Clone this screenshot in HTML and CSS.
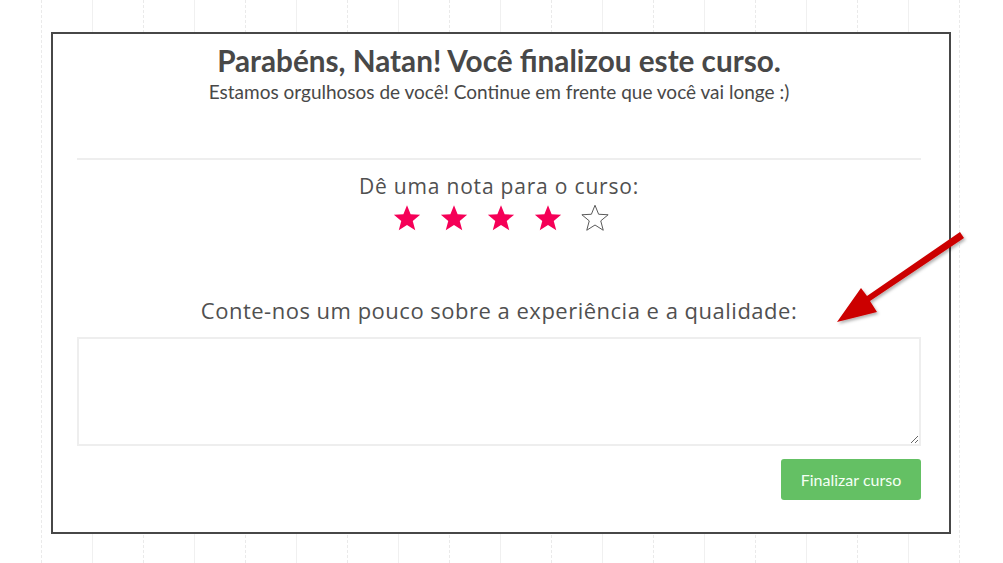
FILE: index.html
```html
<!DOCTYPE html>
<html lang="pt-BR">
<head>
<meta charset="utf-8">
<title>Curso finalizado</title>
<link rel="stylesheet" href="styles.css">
</head>
<body>
<div class="grid-bg" aria-hidden="true">
  <span class="gl dashed"></span><span class="gl"></span><span class="gl dashed"></span><span class="gl"></span>
  <span class="gl dashed"></span><span class="gl"></span><span class="gl dashed"></span><span class="gl"></span>
  <span class="gl dashed"></span><span class="gl"></span><span class="gl dashed"></span><span class="gl"></span>
  <span class="gl dashed"></span><span class="gl"></span><span class="gl dashed"></span><span class="gl"></span>
  <span class="gl dashed"></span><span class="gl"></span><span class="gl dashed"></span>
</div>
<main class="page">
  <section class="modal">
    <header class="head">
      <h1 class="title">Parabéns, Natan! Você finalizou este curso.</h1>
      <p class="subtitle">Estamos orgulhosos de você! Continue em frente que você vai longe :)</p>
    </header>
    <hr class="divider">
    <div class="rating">
      <p class="label">Dê uma nota para o curso:</p>
      <div class="stars">
        <svg class="star on" viewBox="0 0 24 24"><path d="M12 1.8l2.9 7.2 7.6.4-5.9 4.9 2 7.5L12 17.6l-6.6 4.2 2-7.5L1.5 9.4l7.6-.4z"/></svg>
        <svg class="star on" viewBox="0 0 24 24"><path d="M12 1.8l2.9 7.2 7.6.4-5.9 4.9 2 7.5L12 17.6l-6.6 4.2 2-7.5L1.5 9.4l7.6-.4z"/></svg>
        <svg class="star on" viewBox="0 0 24 24"><path d="M12 1.8l2.9 7.2 7.6.4-5.9 4.9 2 7.5L12 17.6l-6.6 4.2 2-7.5L1.5 9.4l7.6-.4z"/></svg>
        <svg class="star on" viewBox="0 0 24 24"><path d="M12 1.8l2.9 7.2 7.6.4-5.9 4.9 2 7.5L12 17.6l-6.6 4.2 2-7.5L1.5 9.4l7.6-.4z"/></svg>
        <svg class="star off" viewBox="0 0 24 24"><path d="M12 1.8l2.9 7.2 7.6.4-5.9 4.9 2 7.5L12 17.6l-6.6 4.2 2-7.5L1.5 9.4l7.6-.4z"/></svg>
      </div>
    </div>
    <div class="feedback">
      <label class="question" for="exp">Conte-nos um pouco sobre a experiência e a qualidade:</label>
      <textarea id="exp" class="box"></textarea>
    </div>
    <div class="actions">
      <button class="btn" type="button">Finalizar curso</button>
    </div>
  </section>
</main>
<svg class="arrow" width="1003" height="563" viewBox="0 0 1003 563" aria-hidden="true">
  <defs>
    <filter id="sh" x="-20%" y="-20%" width="140%" height="140%">
      <feDropShadow dx="1.5" dy="2" stdDeviation="1.5" flood-color="#000" flood-opacity="0.3"/>
    </filter>
  </defs>
  <g filter="url(#sh)" fill="#cc0000">
    <path d="M960 232 L964 238 L870 301 L877 312 L837 322 L861 288 L867 296 Z"/>
  </g>
</svg>
</body>
</html>
```
FILE: styles.css
```css
html, body {
  margin: 0;
  padding: 0;
  background: #fff;
}
body {
  width: 1003px;
  height: 563px;
  overflow: hidden;
  position: relative;
  font-family: "Lato", "Liberation Sans", sans-serif;
}
.grid-bg {
  position: absolute;
  inset: 0;
  display: flex;
  padding-left: 41px;
  z-index: 0;
}
.gl {
  width: 51px;
  flex: none;
  height: 100%;
  box-sizing: border-box;
  border-left: 1px solid #f0f0f0;
}
.gl.dashed {
  border-left: 1px dashed #eaeaea;
}
.page {
  position: relative;
  z-index: 1;
  padding: 32px 0 0 51px;
}
.modal {
  width: 900px;
  height: 502px;
  box-sizing: border-box;
  background: #fff;
  border: 2px solid #474747;
  padding: 0 28px 0 24px;
  display: flex;
  flex-direction: column;
}
.head {
  text-align: center;
  padding-top: 9px;
  height: 115px;
}
.title {
  margin: 0;
  font-family: "Lato", sans-serif;
  font-weight: 700;
  font-size: 29.7px;
  line-height: 36px;
  color: #484848;
}
.subtitle {
  margin: 3px 0 0;
  font-family: "Lato", sans-serif;
  font-size: 19px;
  line-height: 20px;
  color: #484848;
}
.divider {
  margin: 0;
  border: 0;
  height: 2px;
  background: #eeeeee;
}
.rating {
  text-align: center;
  padding-top: 13px;
}
.label {
  margin: 0;
  font-family: "Open Sans", sans-serif;
  font-size: 21px;
  line-height: 26px;
  letter-spacing: 0.8px;
  color: #505050;
}
.stars {
  display: flex;
  justify-content: center;
  gap: 17px;
  margin-top: 4px;
  padding-left: 4px;
}
.star {
  width: 30px;
  height: 30px;
  display: block;
}
.star.on path {
  fill: #f50057;
}
.star.off path {
  fill: none;
  stroke: #5a5a5a;
  stroke-width: 0.8;
  stroke-linejoin: miter;
}
.feedback {
  display: flex;
  flex-direction: column;
  align-items: center;
  margin-top: 62px;
}
.question {
  font-family: "Open Sans", sans-serif;
  font-size: 22px;
  line-height: 30px;
  letter-spacing: 0.5px;
  color: #505050;
}
.box {
  margin-top: 12px;
  width: 100%;
  height: 109px;
  box-sizing: border-box;
  border: 2px solid #eeeeee;
  border-radius: 0;
  outline: none;
  resize: both;
  font: inherit;
}
.actions {
  display: flex;
  justify-content: flex-end;
  margin-top: 13px;
}
.btn {
  width: 140px;
  height: 41px;
  border: 0;
  border-radius: 3px;
  background: #64c064;
  color: #f4fff4;
  font-family: "Lato", sans-serif;
  font-size: 16px;
  padding: 0;
}
.arrow {
  position: absolute;
  left: 0;
  top: 0;
  z-index: 2;
  pointer-events: none;
}
```
